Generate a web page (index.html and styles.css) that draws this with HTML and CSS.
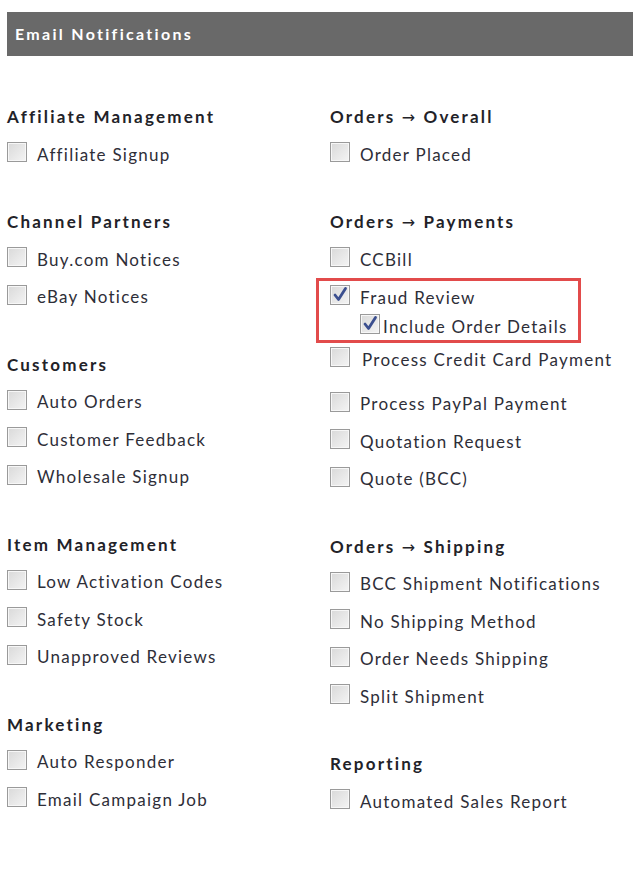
FILE: index.html
```html
<!DOCTYPE html>
<html>
<head>
<meta charset="utf-8">
<link rel="stylesheet" href="styles.css">
</head>
<body>
<div class="page">
  <div class="panel-head">Email Notifications</div>
  <div class="cols">
    <div class="col">
      <div class="section">
        <div class="heading">Affiliate Management</div>
        <label class="row"><span class="cb"></span><span class="lbl">Affiliate Signup</span></label>
      </div>
      <div class="section">
        <div class="heading">Channel Partners</div>
        <label class="row"><span class="cb"></span><span class="lbl">Buy.com Notices</span></label>
        <label class="row"><span class="cb"></span><span class="lbl">eBay Notices</span></label>
      </div>
      <div class="section">
        <div class="heading">Customers</div>
        <label class="row"><span class="cb"></span><span class="lbl">Auto Orders</span></label>
        <label class="row"><span class="cb"></span><span class="lbl">Customer Feedback</span></label>
        <label class="row"><span class="cb"></span><span class="lbl">Wholesale Signup</span></label>
      </div>
      <div class="section">
        <div class="heading">Item Management</div>
        <label class="row"><span class="cb"></span><span class="lbl">Low Activation Codes</span></label>
        <label class="row"><span class="cb"></span><span class="lbl">Safety Stock</span></label>
        <label class="row"><span class="cb"></span><span class="lbl">Unapproved Reviews</span></label>
      </div>
      <div class="section">
        <div class="heading">Marketing</div>
        <label class="row"><span class="cb"></span><span class="lbl">Auto Responder</span></label>
        <label class="row"><span class="cb"></span><span class="lbl">Email Campaign Job</span></label>
      </div>
    </div>
    <div class="col">
      <div class="section">
        <div class="heading">Orders <span class="arrow">&rarr;</span> Overall</div>
        <label class="row"><span class="cb"></span><span class="lbl">Order Placed</span></label>
      </div>
      <div class="section">
        <div class="heading">Orders <span class="arrow">&rarr;</span> Payments</div>
        <label class="row"><span class="cb"></span><span class="lbl">CCBill</span></label>
        <div class="highlight">
          <label class="row row-tight"><span class="cb checked"><svg viewBox="0 0 20 20" width="20" height="20"><path d="M5 10 L8.5 14.5 L15.5 3.5" fill="none" stroke="#3b4f8f" stroke-width="2.8" stroke-linecap="round" stroke-linejoin="round"/></svg></span><span class="lbl">Fraud Review</span></label>
          <label class="row row-tight row-sub"><span class="cb checked"><svg viewBox="0 0 20 20" width="20" height="20"><path d="M5 10 L8.5 14.5 L15.5 3.5" fill="none" stroke="#3b4f8f" stroke-width="2.8" stroke-linecap="round" stroke-linejoin="round"/></svg></span><span class="lbl">Include Order Details</span></label>
        </div>
        <label class="row row-after"><span class="cb"></span><span class="lbl lbl-wide">Process Credit Card Payment</span></label>
        <label class="row row-paypal"><span class="cb"></span><span class="lbl">Process PayPal Payment</span></label>
        <label class="row"><span class="cb"></span><span class="lbl">Quotation Request</span></label>
        <label class="row"><span class="cb"></span><span class="lbl">Quote (BCC)</span></label>
      </div>
      <div class="section">
        <div class="heading">Orders <span class="arrow">&rarr;</span> Shipping</div>
        <label class="row"><span class="cb"></span><span class="lbl">BCC Shipment Notifications</span></label>
        <label class="row"><span class="cb"></span><span class="lbl">No Shipping Method</span></label>
        <label class="row"><span class="cb"></span><span class="lbl">Order Needs Shipping</span></label>
        <label class="row"><span class="cb"></span><span class="lbl">Split Shipment</span></label>
      </div>
      <div class="section">
        <div class="heading">Reporting</div>
        <label class="row"><span class="cb"></span><span class="lbl">Automated Sales Report</span></label>
      </div>
    </div>
  </div>
</div>
</body>
</html>
```
FILE: styles.css
```css
html, body {
  margin: 0;
  padding: 0;
  background: #ffffff;
}
body {
  font-family: Lato, "Open Sans", sans-serif;
  color: #2e2e38;
}
.page {
  padding: 12px 0 0 7px;
}
.panel-head {
  height: 44px;
  background: #696969;
  color: #ffffff;
  font-weight: 700;
  font-size: 16px;
  letter-spacing: 2.3px;
  line-height: 44px;
  padding-left: 8px;
}
.cols {
  display: grid;
  grid-template-columns: 323px 1fr;
  margin-top: 42px;
}
.section {
  margin-bottom: 30px;
}
.heading {
  height: 37.5px;
  line-height: 37.5px;
  font-weight: 700;
  font-size: 17px;
  letter-spacing: 2.2px;
  color: #222228;
}
.arrow {
  font-family: "DejaVu Sans", sans-serif;
  font-weight: 400;
  font-size: 16px;
  letter-spacing: 0;
  margin-right: 2px;
}
.row {
  display: flex;
  align-items: center;
  height: 37.5px;
  gap: 10px;
  cursor: pointer;
}
.cb {
  width: 18px;
  height: 18px;
  border: 1px solid #9a9a9a;
  background: linear-gradient(135deg, #d9d9d9 0%, #f4f4f4 100%);
  box-shadow: inset 0 0 0 1px #f7f7f7;
  flex: none;
  position: relative;
  margin-top: -4px;
}
.cb svg {
  position: absolute;
  left: -1px;
  top: -1px;
}
.lbl {
  font-size: 17px;
  letter-spacing: 1.25px;
  color: #2e2e38;
}
.lbl-wide {
  margin-left: 2px;
}
.highlight {
  width: 248px;
  margin-left: -14px;
  border: 3px solid #e24b4b;
  padding: 1px 0 0 11px;
}
.row-tight {
  height: 30px;
}
.row-sub {
  height: 28px;
  padding-left: 30px;
  gap: 3px;
}
.row-after {
  height: 32px;
}
.row-paypal {
  margin-top: 10px;
}
```
